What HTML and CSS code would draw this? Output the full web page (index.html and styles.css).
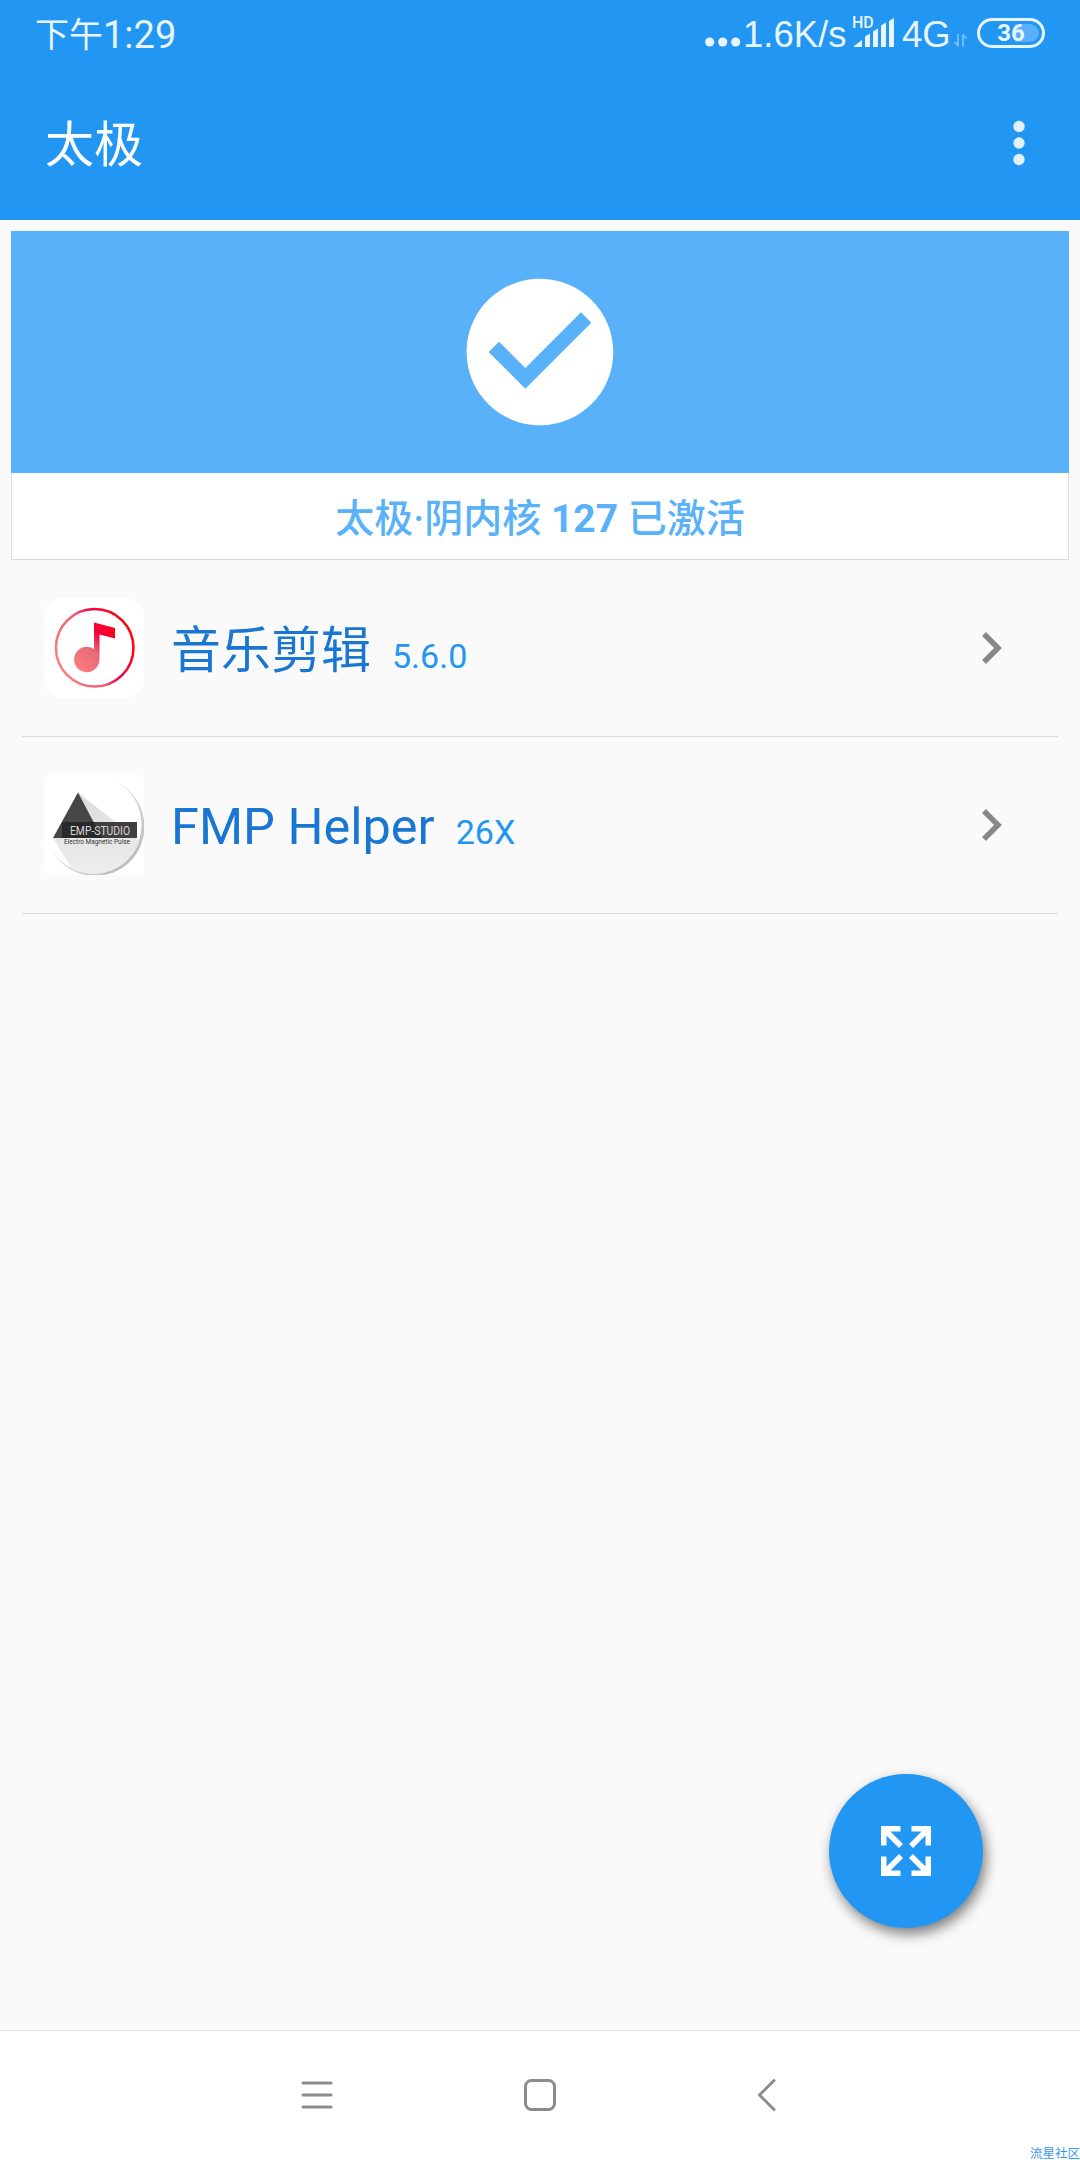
FILE: index.html
```
<!DOCTYPE html>
<html lang="zh-CN">
<head>
<meta charset="utf-8">
<title>太极</title>
<link rel="stylesheet" href="styles.css">
</head>
<body>
<div class="screen">
  <header class="top">
    <div class="status">
      <div class="clock"><span class="clock-zh">下午</span><span class="clock-num">1:29</span></div>
      <div class="indicators">
        <svg class="dots" width="36" height="10" viewBox="0 0 36 10"><circle cx="4.7" cy="5" r="4.6"/><circle cx="17.7" cy="5" r="4.6"/><circle cx="30.7" cy="5" r="4.6"/></svg>
        <span class="speed">1.6K/s</span>
        <div class="signal">
          <span class="hd">HD</span>
          <svg width="42" height="30" viewBox="0 0 42 30"><path d="M1 29V28L9 22V29ZM12 18.500L17 15.500V29H12ZM20 13.500L25 10.500V29H20ZM28 7.500L33 4.500V29H28ZM36 3L41 0V29H36Z"/></svg>
        </div>
        <span class="net">4G</span>
        <svg class="updown" width="13" height="13" viewBox="0 0 13 13"><path d="M4 0V11.500L0.500 8M9 12.500V1L12.500 4.500"/></svg>
        <div class="battery"><span class="charge"></span><span class="percent">36</span></div>
      </div>
    </div>
    <div class="toolbar">
      <h1 class="title">太极</h1>
      <svg class="more" width="12" height="46" viewBox="0 0 12 46"><circle cx="6" cy="6.500" r="5.700"/><circle cx="6" cy="23" r="5.700"/><circle cx="6" cy="39.500" r="5.700"/></svg>
    </div>
  </header>

  <main class="content">
    <section class="card">
      <div class="banner">
        <svg width="176" height="176" viewBox="0 0 24 24"><path d="M12 2C6.480 2 2 6.480 2 12s4.480 10 10 10 10-4.480 10-10S17.520 2 12 2zm-2 15l-5-5 1.410-1.410L10 14.170l7.590-7.590L19 8l-9 9z"/></svg>
      </div>
      <div class="state"><span class="state-text">太极·阴内核 <b>127</b> 已激活</span></div>
    </section>

    <ul class="apps">
      <li class="app">
        <svg class="app-icon" width="100" height="100" viewBox="0 0 100 100">
          <defs><linearGradient id="red" x1="0" y1="0.700" x2="1" y2="0.300"><stop offset="0" stop-color="#fa837c"/><stop offset="0.450" stop-color="#ec5873"/><stop offset="0.600" stop-color="#f2064a"/><stop offset="1" stop-color="#fd0505"/></linearGradient>
          <linearGradient id="note" x1="0" y1="1" x2="0.800" y2="0"><stop offset="0" stop-color="#fc7f78"/><stop offset="0.500" stop-color="#ea6a7b"/><stop offset="0.750" stop-color="#f5003f"/><stop offset="1" stop-color="#ff0019"/></linearGradient></defs>
          <rect width="100" height="100" rx="19" fill="#fff"/>
          <circle cx="50.700" cy="49.700" r="38.800" fill="none" stroke="url(#red)" stroke-width="2.500"/>
          <path d="M50 24.500L71 30V40.500L55.500 36.500V62A12.700 12.700 0 1 1 50 51Z" fill="url(#note)"/>
        </svg>
        <div class="label zh"><span class="name">音乐剪辑</span><span class="version">5.6.0</span></div>
        <svg class="chevron" width="20" height="32" viewBox="0 0 20 32"><path d="M2 2L16 16L2 30"/></svg>
      </li>
      <li class="app">
        <svg class="app-icon" width="100" height="100" viewBox="0 0 100 100">
          <defs><clipPath id="tile"><rect width="100" height="100" rx="6"/></clipPath>
          <linearGradient id="fade" x1="0" y1="0" x2="0" y2="1"><stop offset="0" stop-color="#dcdcdc"/><stop offset="1" stop-color="#f0f0f0"/></linearGradient>
          <linearGradient id="rim" x1="0.300" y1="0.200" x2="0.900" y2="0.800"><stop offset="0" stop-color="#fff"/><stop offset="1" stop-color="#bcbcbc"/></linearGradient>
          <clipPath id="disc"><circle cx="49.500" cy="50.500" r="48.500"/></clipPath></defs>
          <g clip-path="url(#tile)">
            <rect width="100" height="100" fill="#fff"/>
            <circle cx="51" cy="51.500" r="49.500" fill="url(#rim)"/>
            <circle cx="49" cy="49.500" r="48.500" fill="#fff"/>
            <path d="M34 17.500L112 79.500V112H39L9 63Z" fill="url(#fade)" clip-path="url(#disc)"/>
          </g>
          <path d="M34 17.500L58 63H9Z" fill="#464646"/>
          <path d="M18 47H93V63H18Z" fill="#3f3f3f"/>
          <path d="M18 47H50L58 63H18Z" fill="#292929"/>
          <text class="logo-main" x="26" y="59.500" textLength="60" lengthAdjust="spacingAndGlyphs">EMP-STUDIO</text>
          <text class="logo-sub" x="20" y="68.500" textLength="66" lengthAdjust="spacingAndGlyphs">Electro Magnetic Pulse</text>
        </svg>
        <div class="label"><span class="name">FMP Helper</span><span class="version">26X</span></div>
        <svg class="chevron" width="20" height="32" viewBox="0 0 20 32"><path d="M2 2L16 16L2 30"/></svg>
      </li>
    </ul>
    <button class="fab" aria-label="展开">
      <svg width="50" height="50" viewBox="0 0 50 50"><path d="M0 0H19.500V5.500H9.500L22 18L18 22L5.500 9.500V19.500H0ZM50 0H30.500V5.500H40.500L28 18L32 22L44.500 9.500V19.500H50ZM0 50H19.500V44.500H9.500L22 32L18 28L5.500 40.500V30.500H0ZM50 50H30.500V44.500H40.500L28 32L32 28L44.500 40.500V30.500H50Z"/></svg>
    </button>
  </main>

  <nav class="nav">
    <svg width="32" height="34" viewBox="0 0 32 34"><path d="M2 5H30M2 17H30M2 29H30"/></svg>
    <svg width="32" height="34" viewBox="0 0 32 34"><rect x="1.500" y="2.500" width="29" height="29" rx="6"/></svg>
    <svg width="32" height="34" viewBox="0 0 32 34"><path d="M27 2.500L12.500 17L27 31.500"/></svg>
    <span class="mark">流星社区</span>
  </nav>
</div>
</body>
</html>
```
FILE: styles.css
```
* { box-sizing: border-box; }
body {
  margin: 0;
  background: #fafafa;
  font-family: Roboto, "Noto Sans CJK SC", sans-serif;
}
.screen {
  width: 1080px;
  height: 2160px;
  display: flex;
  flex-direction: column;
  overflow: hidden;
}
svg { display: block; flex: none; }

.top { height: 220px; flex: none; background: #2196f3; color: #fff; }
.status {
  height: 68px;
  display: flex;
  justify-content: space-between;
  padding: 0 35px;
  color: #e8f4fe;
}
.clock { display: flex; white-space: nowrap; }
.clock-zh { font: 400 34px/66px "Noto Sans CJK SC", sans-serif; }
.clock-num { font: 38px/70px Roboto, sans-serif; }
.indicators { display: flex; white-space: nowrap; }
.indicators svg { fill: #e8f4fe; }
.dots { margin-top: 37px; }
.speed { font: 36.500px/70px "Liberation Sans", sans-serif; width: 105px; margin-left: 2px; }
.signal { position: relative; width: 54px; padding: 18px 0 0 5px; }
.hd { position: absolute; left: 4px; top: 14px; font: 500 16px/18px Roboto, sans-serif; }
.net { font: 36.500px/70px "Liberation Sans", sans-serif; width: 52px; }
.indicators .updown { margin-top: 34px; fill: none; stroke: #83c3f8; stroke-width: 1.6; }
.battery {
  position: relative;
  width: 68px;
  height: 30px;
  margin: 18px 0 0 10px;
  border: 3px solid #e8f4fe;
  border-radius: 15px;
  text-align: center;
}
.charge {
  position: absolute;
  right: 3px;
  top: 3px;
  width: 24px;
  height: 18px;
  background: #59b0f6;
  border-radius: 0 9px 9px 0;
}
.percent { position: relative; display: block; font: 700 24px/24px Roboto, sans-serif; }

.toolbar {
  height: 150px;
  display: flex;
  align-items: center;
  justify-content: space-between;
  padding: 0 55px 0 45px;
}
.title { margin: 0; padding-bottom: 4px; font: 400 49px/72px "Noto Sans CJK SC", sans-serif; }
.more { fill: #e0f0fe; }

.content { flex: 1; display: flex; flex-direction: column; padding: 11px; }
.card { height: 329px; flex: none; background: #fff; border: 1px solid #dadada; border-top: 0; }
.banner {
  height: 242px;
  margin: 0 -1px;
  display: flex;
  align-items: center;
  justify-content: center;
  background: #58b1f9;
}
.banner svg { fill: #fff; }
.state { height: 86px; padding-top: 2px; text-align: center; color: #58b1f9; }
.state-text { font: 500 39px/88px Roboto, "Noto Sans CJK SC", sans-serif; }
.state-text b { font-weight: 700; }

.apps { list-style: none; margin: 0; padding: 0 11px; }
.app {
  height: 177px;
  display: flex;
  align-items: center;
  padding: 0 56px 0 22px;
  border-bottom: 1px solid #dadada;
}
.label { flex: 1; display: flex; align-items: baseline; margin: 2px 0 0 27px; white-space: nowrap; }
.name { font-size: 50.500px; color: #1976d2; }
.label.zh { margin: 0 0 5px 27px; }
.zh .name { font: 50px "Noto Sans CJK SC", sans-serif; }
.version { margin-left: 21px; font-size: 34px; color: #2196f3; }
.chevron { fill: none; stroke: #888; stroke-width: 5.500; }
.logo-main { font: 12px Roboto, sans-serif; fill: #d8d8d8; }
.logo-sub { font: 7.500px Roboto, sans-serif; fill: #333; }

.fab {
  width: 154px;
  height: 154px;
  margin: auto 86px 91px auto;
  padding: 0;
  border: 0;
  border-radius: 50%;
  display: flex;
  align-items: center;
  justify-content: center;
  background: #2196f3;
  box-shadow: 3px 6px 13px rgba(0, 0, 0, .5);
}
.fab svg { fill: #fff; }

.nav {
  position: relative;
  height: 130px;
  flex: none;
  display: flex;
  align-items: center;
  justify-content: center;
  gap: 191px;
  padding-bottom: 2px;
  background: #fff;
  border-top: 1px solid #e2e2e2;
}
.nav svg { fill: none; stroke: #8c8c8c; stroke-width: 3; stroke-linecap: round; stroke-linejoin: round; }
.mark {
  position: absolute;
  right: 0;
  bottom: 0;
  font: 12.500px/15px "Noto Sans CJK SC", sans-serif;
  color: #3797f0;
}
```
